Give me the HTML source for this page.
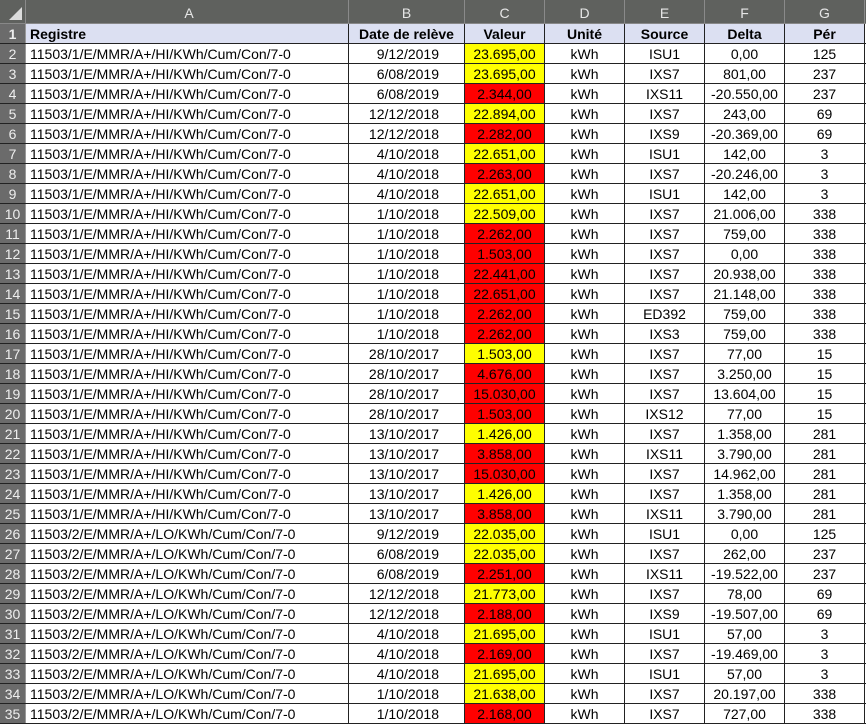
<!DOCTYPE html>
<html><head><meta charset="utf-8"><style>
*{box-sizing:border-box;margin:0;padding:0}
body{width:866px;height:719px;overflow:hidden;background:#fff;font-family:"Liberation Sans",Arial,sans-serif;font-size:14px;color:#000}
.r{display:flex;height:20px;border-bottom:1px solid #222}
.r div{height:19px;line-height:20px;border-right:1px solid #222;white-space:nowrap;overflow:hidden;text-align:center}
.h{background:#5f615e;color:#e8e8e8;height:24px;display:flex;border-bottom:1px solid #888}
.h div{height:23px;line-height:26px;border-right:1px solid #8a8a8a;text-align:center;color:#e6e6e6}
.n{width:26px;background:#6b6b6b!important;color:#eee;border-right:1px solid #999!important}
.a{width:323px;text-align:left!important;padding-left:4px}
.b{width:116px}.c{width:80px}.d{width:80px}.e{width:80px}.f{width:80px}.g{width:80px}
.r div.b{text-align:right;padding-right:25px}
.t div{background:#dce0f2;font-weight:bold}
.t div.b{text-align:center;padding:0}
.Y{background:#ffff00}.R{background:#ff0000}
</style></head><body>
<div class="h"><div class="n" style="background:#5f615e!important;border-right:1px solid #8a8a8a!important;position:relative"><span style="position:absolute;right:3px;bottom:3px;width:0;height:0;border-left:13px solid transparent;border-bottom:13px solid #dcdcdc"></span></div><div class="a" style="text-align:center!important">A</div><div class="b">B</div><div class="c">C</div><div class="d">D</div><div class="e">E</div><div class="f">F</div><div class="g">G</div></div>
<div id="g"></div>
<script>
var A1="11503/1/E/MMR/A+/HI/KWh/Cum/Con/7-0",A2="11503/2/E/MMR/A+/LO/KWh/Cum/Con/7-0";
var d=[
[A1,"9/12/2019","23.695,00","Y","ISU1","0,00","125"],
[A1,"6/08/2019","23.695,00","Y","IXS7","801,00","237"],
[A1,"6/08/2019","2.344,00","R","IXS11","-20.550,00","237"],
[A1,"12/12/2018","22.894,00","Y","IXS7","243,00","69"],
[A1,"12/12/2018","2.282,00","R","IXS9","-20.369,00","69"],
[A1,"4/10/2018","22.651,00","Y","ISU1","142,00","3"],
[A1,"4/10/2018","2.263,00","R","IXS7","-20.246,00","3"],
[A1,"4/10/2018","22.651,00","Y","ISU1","142,00","3"],
[A1,"1/10/2018","22.509,00","Y","IXS7","21.006,00","338"],
[A1,"1/10/2018","2.262,00","R","IXS7","759,00","338"],
[A1,"1/10/2018","1.503,00","R","IXS7","0,00","338"],
[A1,"1/10/2018","22.441,00","R","IXS7","20.938,00","338"],
[A1,"1/10/2018","22.651,00","R","IXS7","21.148,00","338"],
[A1,"1/10/2018","2.262,00","R","ED392","759,00","338"],
[A1,"1/10/2018","2.262,00","R","IXS3","759,00","338"],
[A1,"28/10/2017","1.503,00","Y","IXS7","77,00","15"],
[A1,"28/10/2017","4.676,00","R","IXS7","3.250,00","15"],
[A1,"28/10/2017","15.030,00","R","IXS7","13.604,00","15"],
[A1,"28/10/2017","1.503,00","R","IXS12","77,00","15"],
[A1,"13/10/2017","1.426,00","Y","IXS7","1.358,00","281"],
[A1,"13/10/2017","3.858,00","R","IXS11","3.790,00","281"],
[A1,"13/10/2017","15.030,00","R","IXS7","14.962,00","281"],
[A1,"13/10/2017","1.426,00","Y","IXS7","1.358,00","281"],
[A1,"13/10/2017","3.858,00","R","IXS11","3.790,00","281"],
[A2,"9/12/2019","22.035,00","Y","ISU1","0,00","125"],
[A2,"6/08/2019","22.035,00","Y","IXS7","262,00","237"],
[A2,"6/08/2019","2.251,00","R","IXS11","-19.522,00","237"],
[A2,"12/12/2018","21.773,00","Y","IXS7","78,00","69"],
[A2,"12/12/2018","2.188,00","R","IXS9","-19.507,00","69"],
[A2,"4/10/2018","21.695,00","Y","ISU1","57,00","3"],
[A2,"4/10/2018","2.169,00","R","IXS7","-19.469,00","3"],
[A2,"4/10/2018","21.695,00","Y","ISU1","57,00","3"],
[A2,"1/10/2018","21.638,00","Y","IXS7","20.197,00","338"],
[A2,"1/10/2018","2.168,00","R","IXS7","727,00","338"]];
var h='<div class="r t"><div class="n">1</div><div class="a">Registre</div><div class="b">Date de relève</div><div class="c">Valeur</div><div class="d">Unité</div><div class="e">Source</div><div class="f">Delta</div><div class="g">Pér</div></div>';
d.forEach(function(x,i){h+='<div class="r"><div class="n">'+(i+2)+'</div><div class="a">'+x[0]+'</div><div class="b">'+x[1]+'</div><div class="c '+x[3]+'">'+x[2]+'</div><div class="d">kWh</div><div class="e">'+x[4]+'</div><div class="f">'+x[5]+'</div><div class="g">'+x[6]+'</div></div>';});
document.getElementById('g').innerHTML=h;
</script>
</body></html>
